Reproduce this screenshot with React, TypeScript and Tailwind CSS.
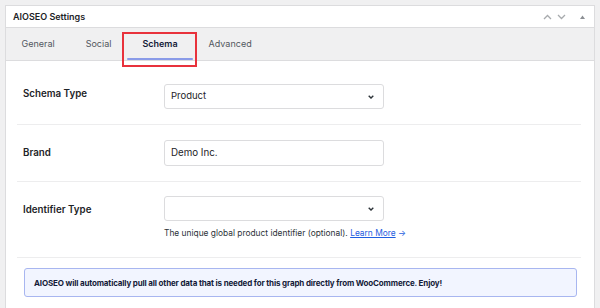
import React from 'react'

function Chevron() {
  return (
    <svg width="6" height="4" viewBox="0 0 6 4">
      <path d="M0.7 0.8 L3 3 L5.3 0.8" fill="none" stroke="#2c3338" strokeWidth="1.4" />
    </svg>
  )
}

export default function App() {
  const tabs = ['General', 'Social', 'Schema', 'Advanced']
  return (
    <div className="h-[308px] w-[600px] overflow-hidden bg-[#f0f0f1] pl-[5px] pr-[5px] pt-[5px]" style={{ fontFamily: 'Inter, "Liberation Sans", sans-serif' }}>
      <div className="h-[320px] border border-[#dcdcde] bg-white">
        <div className="flex h-[22px] items-center justify-between border-b border-[#dcdcde] pl-[7px] pr-[9px]">
          <span className="text-[9px] font-semibold text-[#1d2327]">AIOSEO Settings</span>
          <div className="flex items-center">
            <svg width="9" height="6" viewBox="0 0 9 6"><path d="M1 5 L4.5 1.5 L8 5" fill="none" stroke="#a7aaad" strokeWidth="1.3" /></svg>
            <svg width="9" height="6" viewBox="0 0 9 6" className="ml-[5px]"><path d="M1 1 L4.5 4.5 L8 1" fill="none" stroke="#a7aaad" strokeWidth="1.3" /></svg>
            <svg width="5" height="4" viewBox="0 0 5 4" className="ml-[14px]"><path d="M0 4 L2.5 0.5 L5 4 Z" fill="#8c8f94" /></svg>
          </div>
        </div>
        <div className="flex h-[33px] items-stretch border-b border-[#dcdcde] bg-[#f0f0f1]">
          {tabs.map(t => (
            <div key={t} className={`relative flex items-center px-[15.5px] text-[9px] ${t === 'Schema' ? 'font-semibold text-[#141b38]' : 'text-[#50575e]'}`}>
              <span>{t}</span>
              {t === 'Schema' && (
                <>
                  <div className="absolute bottom-[0px] left-0 right-0 h-[2px] rounded bg-[#8a9be8]" />
                  <div className="absolute -left-[5px] -right-[4px] top-[4px] -bottom-[7px] z-10 border-2 border-[#e8323c]" />
                </>
              )}
            </div>
          ))}
        </div>
        <div className="pl-[11px] pr-[13px]">
          <div className="flex border-b border-[#ededee] pb-[15px] pt-[23px]">
            <div className="w-[147px] pl-[6px] pt-[3px] text-[9.75px] font-semibold leading-[14px] text-[#1d2327]">Schema Type</div>
            <div className="flex h-[25px] w-[220px] items-center justify-between rounded-[3px] border border-[#dcdcde] pl-[6px] pr-[9px] text-[9.5px] text-[#1d2327]">
              <span>Product</span>
              <Chevron />
            </div>
          </div>
          <div className="flex items-center border-b border-[#ededee] pb-[15px] pt-[15px]">
            <div className="w-[147px] pl-[6px] text-[9.75px] font-semibold leading-[14px] text-[#1d2327]">Brand</div>
            <div className="flex h-[26px] w-[220px] items-center rounded-[3px] border border-[#dcdcde] pl-[6px] text-[9.75px] text-[#1d2327]">
              Demo Inc.
            </div>
          </div>
          <div className="flex border-b border-[#ededee] pb-[18px] pt-[14px]">
            <div className="w-[147px] pl-[6px] pt-[7px] text-[9.75px] font-semibold leading-[14px] text-[#1d2327]">Identifier Type</div>
            <div>
              <div className="flex h-[25px] w-[220px] items-center justify-end rounded-[3px] border border-[#dcdcde] pr-[9px]">
                <Chevron />
              </div>
              <div className="mt-[6px] text-[8.4px] leading-[12px] text-[#2c3338]">
                The unique global product identifier (optional).{' '}
                <span className="text-[#1f5ee0] underline">Learn More</span> <span className="text-[#1f5ee0]">→</span>
              </div>
            </div>
          </div>
          <div className="ml-[7px] mr-[4px] mt-[10px] flex h-[29px] items-center rounded-[3px] border border-[#a8b6f0] bg-[#f2f5ff] pl-[9px] text-[8px] font-bold tracking-[-0.15px] text-[#141b38]">
            AIOSEO will automatically pull all other data that is needed for this graph directly from WooCommerce. Enjoy!
          </div>
        </div>
      </div>
    </div>
  )
}
